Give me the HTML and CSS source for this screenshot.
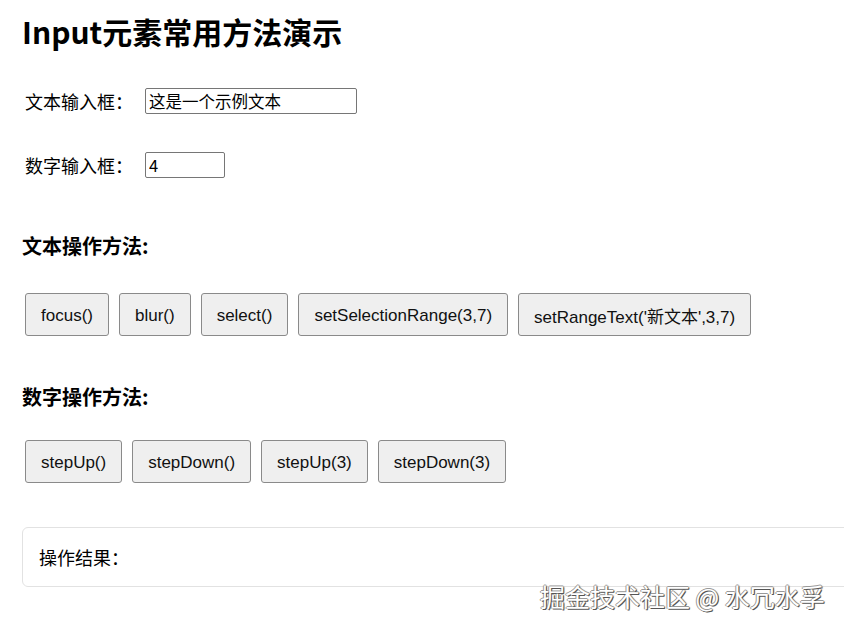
FILE: index.html
```html
<!DOCTYPE html>
<html lang="zh-CN">
<head>
  <meta charset="UTF-8">
  <meta name="viewport" content="width=device-width, initial-scale=1.0">
  <title>Input元素常用方法演示</title>
  <link rel="stylesheet" href="styles.css">
</head>
<body>
  <div class="page">
    <h1 class="title">Input元素常用方法演示</h1>

    <div class="field">
      <label for="textInput">文本输入框：</label>
      <input type="text" id="textInput" class="text-input" value="这是一个示例文本">
    </div>

    <div class="field">
      <label for="numberInput">数字输入框：</label>
      <input type="text" id="numberInput" class="number-input" value="4">
    </div>

    <!-- 文本相关方法 -->
    <h3 class="section-title text-methods">文本操作方法:</h3>
    <div class="buttons text-buttons">
      <button>focus()</button>
      <button>blur()</button>
      <button>select()</button>
      <button>setSelectionRange(3,7)</button>
      <button>setRangeText('新文本',3,7)</button>
    </div>

    <!-- 数字相关方法 -->
    <h3 class="section-title">数字操作方法:</h3>
    <div class="buttons">
      <button>stepUp()</button>
      <button>stepDown()</button>
      <button>stepUp(3)</button>
      <button>stepDown(3)</button>
    </div>

    <div class="result">操作结果：</div>
  </div>

  <div class="watermark">掘金技术社区 @ 水冗水孚</div>
</body>
</html>
```

FILE: styles.css
```css
html, body {
  margin: 0;
  padding: 0;
  overflow: hidden;
  background-color: #fff;
  color: #000;
  font-family: "Noto Sans CJK SC", "Liberation Sans", sans-serif;
}

.page {
  padding: 10px 0 0 22px;
}

.title {
  margin: 0 0 35px 0;
  font-size: 30px;
  font-weight: bold;
  line-height: 42px;
}

.field {
  display: flex;
  align-items: center;
  height: 28px;
  margin: 0 0 36px 3px;
  font-size: 18px;
}

.field label {
  width: 120px;
}

.field input {
  box-sizing: border-box;
  height: 26px;
  padding: 0 3px;
  border: 1px solid #767676;
  border-radius: 2px;
  font-family: "Noto Sans CJK SC", sans-serif;
  font-size: 16.5px;
  color: #000;
}

.text-input {
  width: 212px;
}

.number-input {
  width: 80px;
}

.section-title {
  margin: 48px 0 0 0;
  font-size: 20px;
  font-weight: bold;
  line-height: 26px;
}

.section-title.text-methods {
  margin-top: 54px;
}

.buttons {
  display: flex;
  gap: 10px;
  margin: 30px 0 0 3px;
}

.buttons.text-buttons {
  margin-top: 34px;
}

.buttons button {
  box-sizing: border-box;
  height: 43px;
  padding: 2px 15px 0;
  border: 1px solid #8a8a8a;
  border-radius: 3px;
  background-color: #efefef;
  font-family: "Liberation Sans", Arial, sans-serif;
  font-size: 17px;
  color: #111;
}

.result {
  box-sizing: border-box;
  width: 900px;
  height: 60px;
  margin-top: 44px;
  padding: 0 16px;
  display: flex;
  align-items: center;
  border: 1px solid #e2e2e2;
  border-radius: 6px;
  font-size: 18px;
}

/* 右下角社区水印 */
.watermark {
  position: absolute;
  left: 540px;
  top: 578px;
  font-family: "Noto Sans CJK SC", sans-serif;
  font-size: 25px;
  color: #fff;
  text-shadow: 1px 1px 0 #555, -1px 0 0 #999, 0 -1px 0 #999, 1px 0 1px #666;
}
```
